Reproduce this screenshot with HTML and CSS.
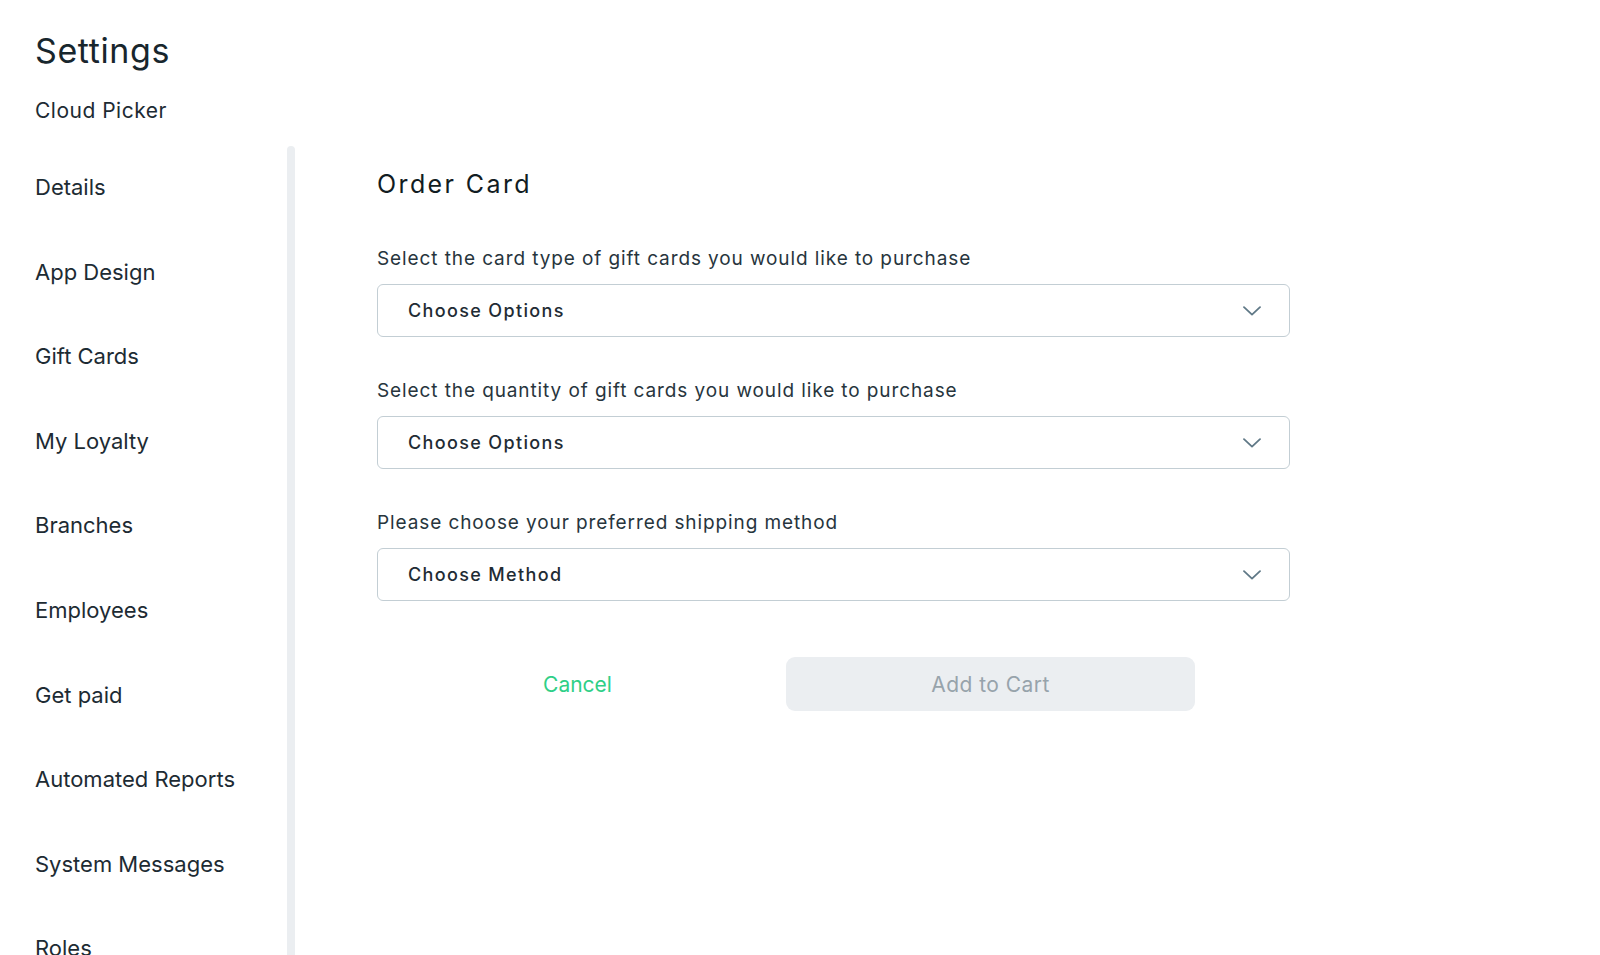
FILE: index.html
```html
<!DOCTYPE html>
<html lang="en">
<head>
<meta charset="utf-8">
<title>Settings</title>
<link rel="stylesheet" href="styles.css">
</head>
<body>
<div class="page">
  <header class="header">
    <h1 class="title">Settings</h1>
    <div class="subtitle">Cloud Picker</div>
  </header>
  <div class="body">
    <nav class="nav">
      <a class="nav-item">Details</a>
      <a class="nav-item">App Design</a>
      <a class="nav-item">Gift Cards</a>
      <a class="nav-item">My Loyalty</a>
      <a class="nav-item">Branches</a>
      <a class="nav-item">Employees</a>
      <a class="nav-item">Get paid</a>
      <a class="nav-item">Automated Reports</a>
      <a class="nav-item">System Messages</a>
      <a class="nav-item">Roles</a>
    </nav>
    <div class="track"></div>
    <main class="main">
      <h2 class="card-title">Order Card</h2>
      <div class="field">
        <div class="label">Select the card type of gift cards you would like to purchase</div>
        <div class="select"><span class="select-text">Choose Options</span>
          <svg class="chev" width="18" height="10" viewBox="0 0 18 10"><path d="M1 1.2 L9 8.6 L17 1.2" fill="none" stroke="#5f7886" stroke-width="1.8" stroke-linecap="round" stroke-linejoin="round"/></svg>
        </div>
      </div>
      <div class="field">
        <div class="label">Select the quantity of gift cards you would like to purchase</div>
        <div class="select"><span class="select-text">Choose Options</span>
          <svg class="chev" width="18" height="10" viewBox="0 0 18 10"><path d="M1 1.2 L9 8.6 L17 1.2" fill="none" stroke="#5f7886" stroke-width="1.8" stroke-linecap="round" stroke-linejoin="round"/></svg>
        </div>
      </div>
      <div class="field">
        <div class="label">Please choose your preferred shipping method</div>
        <div class="select"><span class="select-text">Choose Method</span>
          <svg class="chev" width="18" height="10" viewBox="0 0 18 10"><path d="M1 1.2 L9 8.6 L17 1.2" fill="none" stroke="#5f7886" stroke-width="1.8" stroke-linecap="round" stroke-linejoin="round"/></svg>
        </div>
      </div>
      <div class="actions">
        <button class="btn btn-cancel">Cancel</button>
        <button class="btn btn-add">Add to Cart</button>
      </div>
    </main>
  </div>
</div>
</body>
</html>
```
FILE: styles.css
```css
* { box-sizing: border-box; }
html, body { margin: 0; padding: 0; background: #fff; }
body {
  font-family: Inter, Lato, sans-serif;
  color: #1d2b33;
  height: 955px;
  overflow: hidden;
}
.page { display: flex; flex-direction: column; height: 955px; }
.header { height: 146px; padding-left: 35px; }
.title {
  margin: 0;
  padding-top: 30px;
  font-size: 34px;
  font-weight: 400;
  line-height: 41px;
  letter-spacing: 0.6px;
  color: #18262d;
}
.subtitle {
  margin-top: 27px;
  font-size: 21px;
  line-height: 25px;
  letter-spacing: 0.5px;
  color: #1d2b33;
}
.body { display: flex; flex: 1; min-height: 0; }
.nav {
  width: 287px;
  padding-left: 35px;
  margin-top: -1px;
  display: flex;
  flex-direction: column;
}
.nav-item {
  display: block;
  font-size: 22px;
  line-height: 84.6px;
  height: 84.6px;
  flex: none;
  color: #1d2b33;
}
.track {
  width: 8px;
  background: #ebeef1;
  border-radius: 4px 4px 0 0;
  flex: none;
}
.main { padding-left: 82px; padding-top: 23px; }
.card-title {
  margin: 0;
  font-size: 25px;
  font-weight: 400;
  line-height: 30px;
  letter-spacing: 2.4px;
  color: #111c22;
}
.field { width: 913px; margin-top: 42px; }
.card-title + .field { margin-top: 48px; }
.label {
  font-size: 19px;
  line-height: 24px;
  letter-spacing: 0.9px;
  color: #27353d;
}
.select {
  margin-top: 13px;
  height: 53px;
  border: 1px solid #c3ced4;
  border-radius: 6px;
  display: flex;
  align-items: center;
  justify-content: space-between;
  padding: 0 28px 0 30px;
}
.select-text {
  font-size: 18px;
  font-weight: 500;
  letter-spacing: 1.35px;
  color: #1f2c34;
}
.actions { display: flex; margin-top: 56px; }
.btn {
  width: 409px;
  height: 54px;
  border: none;
  font-family: inherit;
  font-size: 21px;
  border-radius: 9px;
  background: transparent;
  padding: 0;
}
.btn-cancel { color: #2fcf87; padding-right: 8px; }
.btn-add { background: #ebeef1; color: #97a3ab; letter-spacing: 0.45px; }
```
